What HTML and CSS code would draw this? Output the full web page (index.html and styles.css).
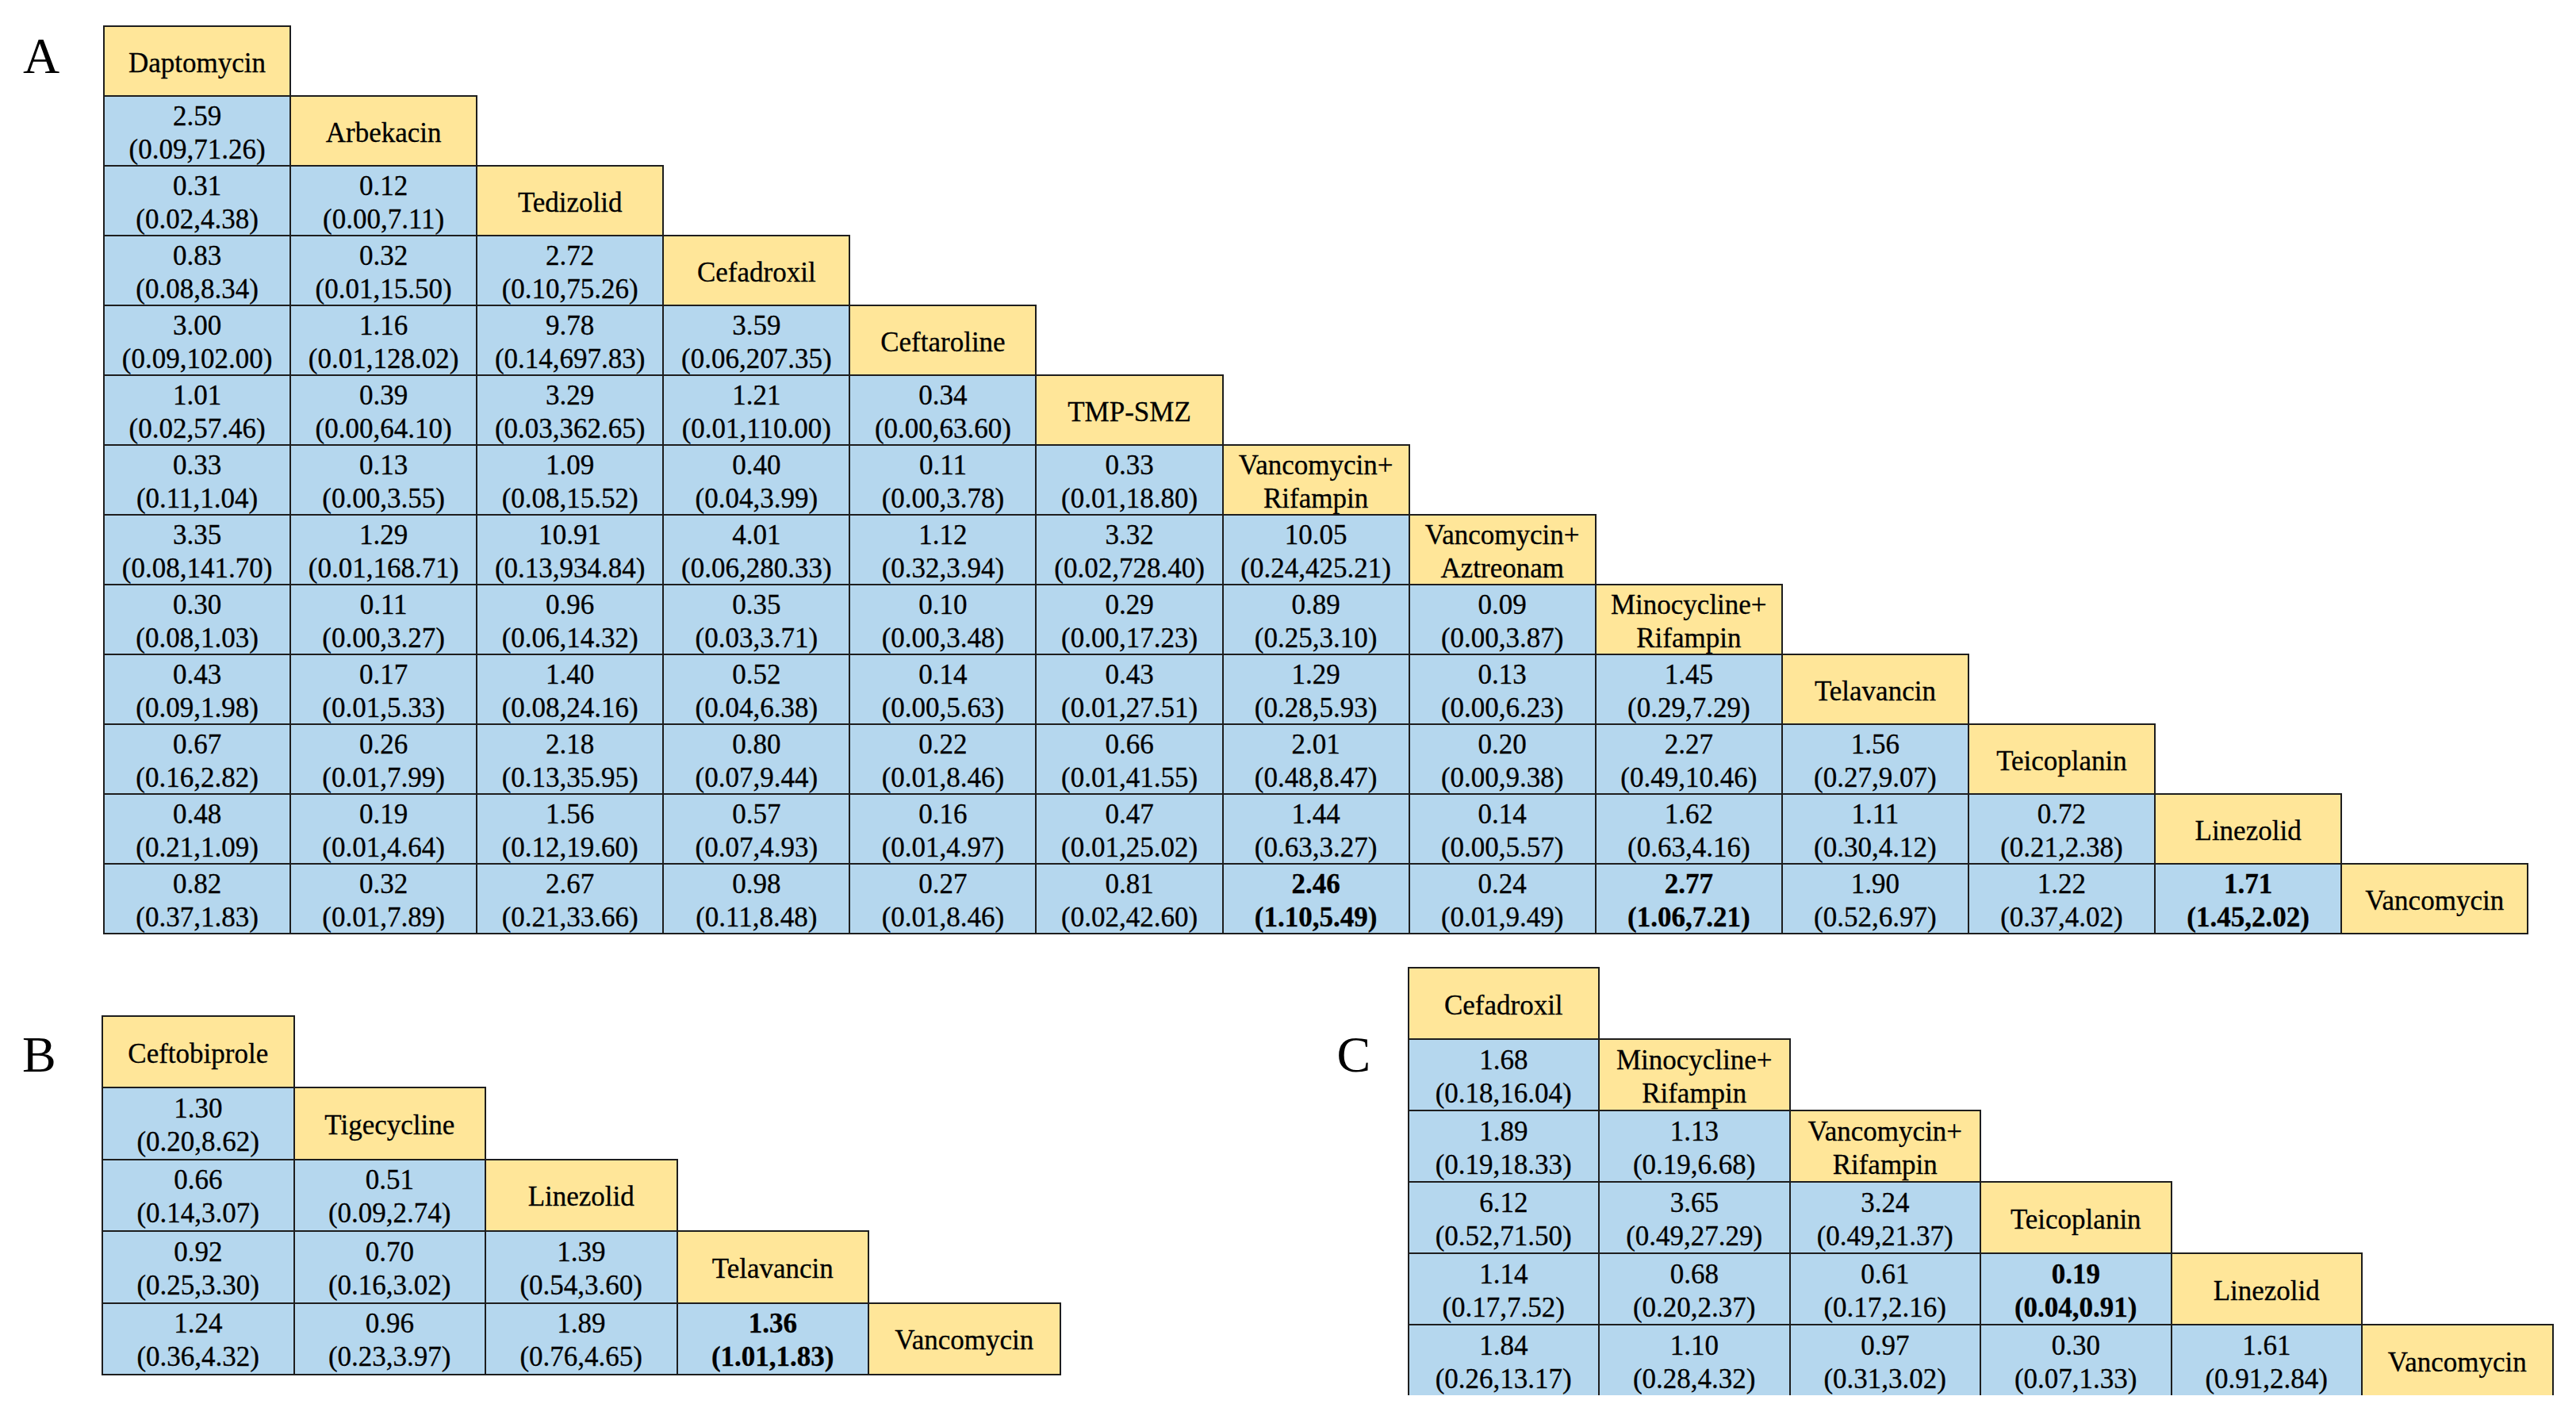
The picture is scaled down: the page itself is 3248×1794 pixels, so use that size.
FILE: index.html
```html
<!DOCTYPE html>
<html lang="en">
<head>
<meta charset="utf-8">
<title>Pairwise comparison matrices</title>
<link rel="stylesheet" href="styles.css">
</head>
<body>
<div class="page">
  <section class="panel panel-a">
    <div class="label">A</div>
    <div class="tri tri-a">
      <div class="r"><div class="h">Daptomycin</div></div>
      <div class="r"><div class="v">2.59<br>(0.09,71.26)</div><div class="h">Arbekacin</div></div>
      <div class="r"><div class="v">0.31<br>(0.02,4.38)</div><div class="v">0.12<br>(0.00,7.11)</div><div class="h">Tedizolid</div></div>
      <div class="r"><div class="v">0.83<br>(0.08,8.34)</div><div class="v">0.32<br>(0.01,15.50)</div><div class="v">2.72<br>(0.10,75.26)</div><div class="h">Cefadroxil</div></div>
      <div class="r"><div class="v">3.00<br>(0.09,102.00)</div><div class="v">1.16<br>(0.01,128.02)</div><div class="v">9.78<br>(0.14,697.83)</div><div class="v">3.59<br>(0.06,207.35)</div><div class="h">Ceftaroline</div></div>
      <div class="r"><div class="v">1.01<br>(0.02,57.46)</div><div class="v">0.39<br>(0.00,64.10)</div><div class="v">3.29<br>(0.03,362.65)</div><div class="v">1.21<br>(0.01,110.00)</div><div class="v">0.34<br>(0.00,63.60)</div><div class="h">TMP-SMZ</div></div>
      <div class="r"><div class="v">0.33<br>(0.11,1.04)</div><div class="v">0.13<br>(0.00,3.55)</div><div class="v">1.09<br>(0.08,15.52)</div><div class="v">0.40<br>(0.04,3.99)</div><div class="v">0.11<br>(0.00,3.78)</div><div class="v">0.33<br>(0.01,18.80)</div><div class="h">Vancomycin+<br>Rifampin</div></div>
      <div class="r"><div class="v">3.35<br>(0.08,141.70)</div><div class="v">1.29<br>(0.01,168.71)</div><div class="v">10.91<br>(0.13,934.84)</div><div class="v">4.01<br>(0.06,280.33)</div><div class="v">1.12<br>(0.32,3.94)</div><div class="v">3.32<br>(0.02,728.40)</div><div class="v">10.05<br>(0.24,425.21)</div><div class="h">Vancomycin+<br>Aztreonam</div></div>
      <div class="r"><div class="v">0.30<br>(0.08,1.03)</div><div class="v">0.11<br>(0.00,3.27)</div><div class="v">0.96<br>(0.06,14.32)</div><div class="v">0.35<br>(0.03,3.71)</div><div class="v">0.10<br>(0.00,3.48)</div><div class="v">0.29<br>(0.00,17.23)</div><div class="v">0.89<br>(0.25,3.10)</div><div class="v">0.09<br>(0.00,3.87)</div><div class="h">Minocycline+<br>Rifampin</div></div>
      <div class="r"><div class="v">0.43<br>(0.09,1.98)</div><div class="v">0.17<br>(0.01,5.33)</div><div class="v">1.40<br>(0.08,24.16)</div><div class="v">0.52<br>(0.04,6.38)</div><div class="v">0.14<br>(0.00,5.63)</div><div class="v">0.43<br>(0.01,27.51)</div><div class="v">1.29<br>(0.28,5.93)</div><div class="v">0.13<br>(0.00,6.23)</div><div class="v">1.45<br>(0.29,7.29)</div><div class="h">Telavancin</div></div>
      <div class="r"><div class="v">0.67<br>(0.16,2.82)</div><div class="v">0.26<br>(0.01,7.99)</div><div class="v">2.18<br>(0.13,35.95)</div><div class="v">0.80<br>(0.07,9.44)</div><div class="v">0.22<br>(0.01,8.46)</div><div class="v">0.66<br>(0.01,41.55)</div><div class="v">2.01<br>(0.48,8.47)</div><div class="v">0.20<br>(0.00,9.38)</div><div class="v">2.27<br>(0.49,10.46)</div><div class="v">1.56<br>(0.27,9.07)</div><div class="h">Teicoplanin</div></div>
      <div class="r"><div class="v">0.48<br>(0.21,1.09)</div><div class="v">0.19<br>(0.01,4.64)</div><div class="v">1.56<br>(0.12,19.60)</div><div class="v">0.57<br>(0.07,4.93)</div><div class="v">0.16<br>(0.01,4.97)</div><div class="v">0.47<br>(0.01,25.02)</div><div class="v">1.44<br>(0.63,3.27)</div><div class="v">0.14<br>(0.00,5.57)</div><div class="v">1.62<br>(0.63,4.16)</div><div class="v">1.11<br>(0.30,4.12)</div><div class="v">0.72<br>(0.21,2.38)</div><div class="h">Linezolid</div></div>
      <div class="r"><div class="v">0.82<br>(0.37,1.83)</div><div class="v">0.32<br>(0.01,7.89)</div><div class="v">2.67<br>(0.21,33.66)</div><div class="v">0.98<br>(0.11,8.48)</div><div class="v">0.27<br>(0.01,8.46)</div><div class="v">0.81<br>(0.02,42.60)</div><div class="v b">2.46<br>(1.10,5.49)</div><div class="v">0.24<br>(0.01,9.49)</div><div class="v b">2.77<br>(1.06,7.21)</div><div class="v">1.90<br>(0.52,6.97)</div><div class="v">1.22<br>(0.37,4.02)</div><div class="v b">1.71<br>(1.45,2.02)</div><div class="h">Vancomycin</div></div>
    </div>
  </section>

  <div class="bottom">
    <section class="panel panel-b">
      <div class="label">B</div>
      <div class="tri tri-b">
        <div class="r"><div class="h">Ceftobiprole</div></div>
        <div class="r"><div class="v">1.30<br>(0.20,8.62)</div><div class="h">Tigecycline</div></div>
        <div class="r"><div class="v">0.66<br>(0.14,3.07)</div><div class="v">0.51<br>(0.09,2.74)</div><div class="h">Linezolid</div></div>
        <div class="r"><div class="v">0.92<br>(0.25,3.30)</div><div class="v">0.70<br>(0.16,3.02)</div><div class="v">1.39<br>(0.54,3.60)</div><div class="h">Telavancin</div></div>
        <div class="r"><div class="v">1.24<br>(0.36,4.32)</div><div class="v">0.96<br>(0.23,3.97)</div><div class="v">1.89<br>(0.76,4.65)</div><div class="v b">1.36<br>(1.01,1.83)</div><div class="h">Vancomycin</div></div>
      </div>
    </section>

    <section class="panel panel-c">
      <div class="label">C</div>
      <div class="tri tri-c">
        <div class="r"><div class="h">Cefadroxil</div></div>
        <div class="r"><div class="v">1.68<br>(0.18,16.04)</div><div class="h">Minocycline+<br>Rifampin</div></div>
        <div class="r"><div class="v">1.89<br>(0.19,18.33)</div><div class="v">1.13<br>(0.19,6.68)</div><div class="h">Vancomycin+<br>Rifampin</div></div>
        <div class="r"><div class="v">6.12<br>(0.52,71.50)</div><div class="v">3.65<br>(0.49,27.29)</div><div class="v">3.24<br>(0.49,21.37)</div><div class="h">Teicoplanin</div></div>
        <div class="r"><div class="v">1.14<br>(0.17,7.52)</div><div class="v">0.68<br>(0.20,2.37)</div><div class="v">0.61<br>(0.17,2.16)</div><div class="v b">0.19<br>(0.04,0.91)</div><div class="h">Linezolid</div></div>
        <div class="r"><div class="v">1.84<br>(0.26,13.17)</div><div class="v">1.10<br>(0.28,4.32)</div><div class="v">0.97<br>(0.31,3.02)</div><div class="v">0.30<br>(0.07,1.33)</div><div class="v">1.61<br>(0.91,2.84)</div><div class="h">Vancomycin</div></div>
      </div>
    </section>
  </div>
</div>
</body>
</html>
```

FILE: styles.css
```css
html, body {
  margin: 0;
  padding: 0;
  background: #ffffff;
}

body {
  font-family: "Liberation Serif", "Times New Roman", "DejaVu Serif", serif;
  color: #000000;
}

.page {
  padding-top: 32px;
}

.panel {
  display: flex;
  align-items: flex-start;
}

.label {
  font-size: 64px;
  line-height: 64px;
  margin-top: 79px;
}

.panel-a .label {
  margin-left: 29px;
  width: 101px;
  margin-top: 7px;
}

.tri {
  --cw: 235px;
  --rh: 88px;
  display: flex;
  flex-direction: column;
  align-items: flex-start;
}

.tri-a {
  --cw: 235.1px;
  --rh: 88px;
}

.tri-b {
  --cw: 241.5px;
  --rh: 90.4px;
  margin-top: 61px;
}

.tri-c {
  --cw: 240.5px;
  --rh: 90px;
}

.r {
  display: flex;
  margin-bottom: -2px;
}

.h,
.v {
  box-sizing: border-box;
  width: calc(var(--cw) + 2px);
  height: calc(var(--rh) + 2px);
  margin-right: -2px;
  border: 2px solid #1e1e1e;
  display: flex;
  align-items: center;
  justify-content: center;
  text-align: center;
  font-size: 35px;
  line-height: 42px;
  padding-top: 5px;
  white-space: nowrap;
  -webkit-text-stroke: 0.3px #000000;
}

.h {
  background: #ffe699;
}

.v {
  background: #b5d7ee;
}

.b {
  font-weight: bold;
}

.bottom {
  display: flex;
  align-items: flex-start;
  margin-top: 43px;
}

.panel-b .label {
  margin-left: 28px;
  width: 100px;
}

.panel-c {
  margin-left: 350px;
}

.panel-c .label {
  width: 89px;
}
```
